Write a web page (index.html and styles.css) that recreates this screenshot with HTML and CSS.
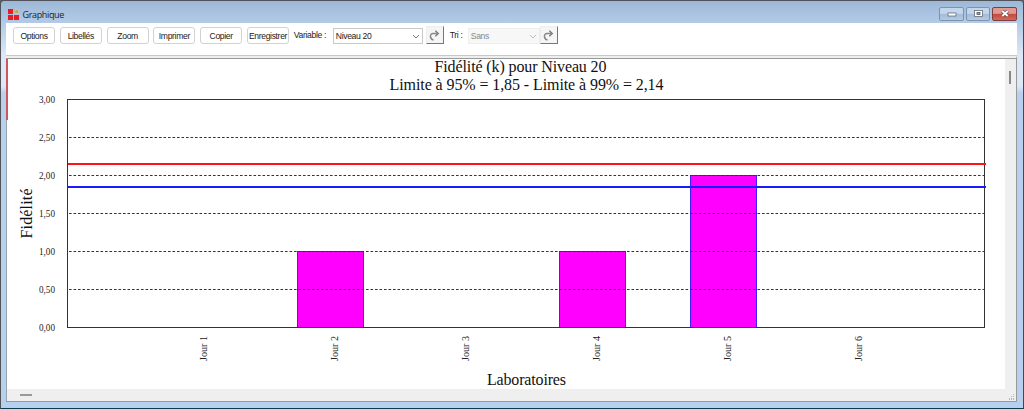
FILE: index.html
```html
<!DOCTYPE html>
<html lang="fr">
<head>
    <meta charset="UTF-8">
    <title>Graphique</title>
    <link rel="stylesheet" href="styles.css">
</head>
<body>
    <div class="window">
        <div class="titlebar">
            <svg class="logo" width="12" height="12" viewBox="0 0 12 12">
                <path d="M0 0h5v5H0zM0 6h5v5H0zM6 6h5v5H6z" fill="#e81c24"/>
                <path d="M6 0h5v5H6z" fill="#c9c4b4"/>
                <path d="M6 .5l2 3.5 1-3 1 3" fill="none" stroke="#b8964a" stroke-width=".8"/>
            </svg>
            <span class="title">Graphique</span>
            <div class="controls">
                <span class="control">
                    <svg width="24" height="13" viewBox="0 0 24 13"><rect x="8" y="6" width="8" height="3" fill="#fff" stroke="#666c78" stroke-width=".8"/></svg>
                </span>
                <span class="control">
                    <svg width="23" height="13" viewBox="0 0 23 13"><rect x="7.5" y="3.5" width="8" height="6" fill="#fff" stroke="#666c78" stroke-width=".8"/><rect x="10" y="5.5" width="3" height="2" fill="#7fa0c4" stroke="#555c68" stroke-width=".8"/></svg>
                </span>
                <span class="control close">
                    <svg width="24" height="13" viewBox="0 0 24 13"><path d="M9.3 4l5.4 5M14.7 4L9.3 9" stroke="#69393a" stroke-width="3.4"/><path d="M9.3 4l5.4 5M14.7 4L9.3 9" stroke="#fff" stroke-width="2"/></svg>
                </span>
            </div>
        </div>

        <div class="toolbar">
            <button>Options</button>
            <button>Libellés</button>
            <button>Zoom</button>
            <button>Imprimer</button>
            <button>Copier</button>
            <button>Enregistrer</button>
            <label class="label-variable">Variable :</label>
            <div class="combo">
                <span>Niveau 20</span>
                <svg width="8" height="5" viewBox="0 0 8 5"><path d="M1 1l3 3 3-3" fill="none" stroke="#777"/></svg>
            </div>
            <div class="refresh">
                <svg width="11" height="11" viewBox="0 0 11 11"><path d="M4.5 10C.5 9 .5 3.5 4 3.5H8" fill="none" stroke="#888" stroke-width="1.5"/><path d="M6.3.8L9.3 3.5 6.3 6.2" fill="none" stroke="#777" stroke-width="1.3"/></svg>
            </div>
            <label class="label-tri">Tri :</label>
            <div class="combo disabled">
                <span>Sans</span>
                <svg width="8" height="5" viewBox="0 0 8 5"><path d="M1 1l3 3 3-3" fill="none" stroke="#bbb"/></svg>
            </div>
            <div class="refresh refresh-tri">
                <svg width="11" height="11" viewBox="0 0 11 11"><path d="M4.5 10C.5 9 .5 3.5 4 3.5H8" fill="none" stroke="#888" stroke-width="1.5"/><path d="M6.3.8L9.3 3.5 6.3 6.2" fill="none" stroke="#777" stroke-width="1.3"/></svg>
            </div>
        </div>

        <div class="view">
            <svg class="chart" width="999" height="330" viewBox="6 59 999 330">
                <rect x="6" y="59" width="1" height="330" fill="#9aa3b0"/>
                <rect x="6" y="59" width="2" height="61" fill="#cf5460"/>

                <g class="heading">
                    <text x="434.5" y="72" textLength="172">Fidélité (k) pour Niveau 20</text>
                    <text x="389.5" y="89.5" textLength="274">Limite à 95% = 1,85 - Limite à 99% = 2,14</text>
                    <text x="487" y="385" textLength="79">Laboratoires</text>
                    <text transform="translate(32 238.5) rotate(-90)" textLength="50">Fidélité</text>
                </g>

                <!-- bars -->
                <g class="bars">
                    <rect x="297.5" y="251.5" width="66" height="76"/>
                    <rect x="559.5" y="251.5" width="66" height="76"/>
                    <rect x="690.5" y="175.5" width="66" height="152"/>
                </g>

                <!-- grid -->
                <path class="grid" d="M69 137.5H984M69 175.5H984M69 213.5H984M69 251.5H984M69 289.5H984"/>
                <rect class="frame" x="67.5" y="99.5" width="917" height="228"/>

                <!-- limits -->
                <rect x="68" y="163" width="918" height="2" fill="#ff1414"/>
                <rect x="68" y="186" width="918" height="2" fill="#1a1aff"/>

                <g class="ticks">
                    <text x="39" y="102.5" textLength="16" lengthAdjust="spacingAndGlyphs">3,00</text>
                    <text x="39" y="140.5" textLength="16" lengthAdjust="spacingAndGlyphs">2,50</text>
                    <text x="39" y="179" textLength="16" lengthAdjust="spacingAndGlyphs">2,00</text>
                    <text x="39" y="217" textLength="16" lengthAdjust="spacingAndGlyphs">1,50</text>
                    <text x="39" y="255" textLength="16" lengthAdjust="spacingAndGlyphs">1,00</text>
                    <text x="39" y="293" textLength="16" lengthAdjust="spacingAndGlyphs">0,50</text>
                    <text x="39" y="331" textLength="16" lengthAdjust="spacingAndGlyphs">0,00</text>
                    <text transform="translate(206.5 361) rotate(-90)" textLength="25" lengthAdjust="spacingAndGlyphs">Jour 1</text>
                    <text transform="translate(337.5 361) rotate(-90)" textLength="25" lengthAdjust="spacingAndGlyphs">Jour 2</text>
                    <text transform="translate(468.5 361) rotate(-90)" textLength="25" lengthAdjust="spacingAndGlyphs">Jour 3</text>
                    <text transform="translate(599.5 361) rotate(-90)" textLength="25" lengthAdjust="spacingAndGlyphs">Jour 4</text>
                    <text transform="translate(730.5 361) rotate(-90)" textLength="25" lengthAdjust="spacingAndGlyphs">Jour 5</text>
                    <text transform="translate(861.5 361) rotate(-90)" textLength="25" lengthAdjust="spacingAndGlyphs">Jour 6</text>
                </g>
            </svg>
            <div class="vscroll"><i></i></div>
            <div class="hscroll">
                <i></i>
                <svg width="7" height="7" viewBox="0 0 7 7"><path d="M5 0h1v1H5zM3 2h1v1H3zM5 2h1v1H5zM1 4h1v2H1zM3 4h1v2H3zM5 4h1v2H5z" fill="#b5b5b5"/></svg>
            </div>
        </div>
    </div>
</body>
</html>
```
FILE: styles.css
```css
* {
    box-sizing: border-box;
}
body {
    margin: 0;
    background-color: #5a6066;
    font-family: "Liberation Sans", Arial, sans-serif;
    font-size: 8.6px;
    letter-spacing: -0.35px;
    color: #222;
}
svg {
    display: block;
}
.window {
    height: 409px;
    padding: 0 6px 0 5px;
    border: 1px solid #505458;
    border-right-color: #06606e;
    border-bottom-color: #033f4d;
    border-radius: 4px 4px 0 0;
    background: linear-gradient(#9db8d7 0, #b3cbe7 22px, #dce8f7 55px, #dce8f7 85px, #b7d0ee 92px);
    overflow: hidden;
}
.titlebar {
    display: flex;
    height: 22px;
    padding-left: 2px;
}
.logo {
    margin-top: 8px;
}
.title {
    margin: 8px 0 0 2.5px;
    font-family: "Open Sans", sans-serif;
    font-size: 9px;
    line-height: 12px;
    letter-spacing: -0.35px;
}
.controls {
    display: flex;
    gap: 2px;
    margin: 6px 0 0 auto;
}
.control {
    height: 14px;
    border: 1px solid #7f93ae;
    border-radius: 2px;
    background: linear-gradient(#c4d6eb 45%, #a3bbd7 50%, #b5cbe4);
}
.control svg {
    margin: -1px -0.5px;
}
.close {
    border-color: #803e42;
    background: linear-gradient(#df9a91 45%, #c6473a 50%, #d16a58);
}
.toolbar {
    display: flex;
    height: 33px;
    padding: 4px 0 0 7px;
    background-color: #fff;
    border-bottom: 1px solid #c8c8c8;
}
button {
    width: 42px;
    height: 17px;
    margin: 0 4.8px 0 0;
    padding: 0;
    border: 1px solid #d2d2d2;
    border-radius: 3px;
    background-color: #fff;
    font: inherit;
    letter-spacing: inherit;
    color: inherit;
    white-space: nowrap;
}
.label-variable,
.label-tri {
    width: 39px;
    line-height: 17px;
    white-space: nowrap;
}
.label-tri {
    width: 18px;
    margin-left: 6px;
}
.combo {
    display: flex;
    align-items: center;
    justify-content: space-between;
    width: 90px;
    height: 16px;
    margin-top: 1px;
    padding: 0 2px;
    border: 1px solid #c8c8c8;
}
.disabled {
    width: 72px;
    border-color: #eee;
    background-color: #f7f7f7;
    color: #888;
}
.refresh {
    display: flex;
    align-items: center;
    justify-content: center;
    width: 18px;
    height: 18px;
    margin: -1px 0 0 3px;
    border: 1px solid #eee;
    border-right: 1px solid #777;
    border-bottom: 1px solid #777;
    background-color: #f5f5f5;
}
.refresh-tri {
    margin-left: 0;
}
.view {
    display: grid;
    grid-template-columns: 999px 1fr;
    grid-template-rows: 330px 12px;
    height: 346px;
    border-top: 2px solid #eee;
    border-right: 1px solid #999;
    border-bottom: 1px solid #999;
    box-shadow: inset 0 1px #999;
    padding-top: 1px;
    background-color: #efefef;
}
.chart {
    background-color: #fff;
    font-family: "Liberation Serif", "Times New Roman", serif;
    letter-spacing: 0;
}
.heading {
    font-size: 16px;
    fill: #111;
}
.ticks {
    font-size: 10.5px;
    fill: #222;
}
.bars {
    fill: #f0f;
    stroke: #3a20ff;
}
.grid {
    fill: none;
    stroke: #333;
    stroke-dasharray: 2.6 1.9;
}
.frame {
    fill: none;
    stroke: #333;
}
.vscroll {
    padding: 12px 0 0 4px;
}
.vscroll i {
    display: block;
    width: 2px;
    height: 13px;
    background-color: #888;
}
.hscroll {
    grid-column: 1 / 3;
    display: flex;
    justify-content: space-between;
    padding: 5px 1px 0 13px;
    border-left: 1px solid #9aa3b0;
}
.hscroll i {
    width: 12px;
    height: 2px;
    background-color: #999;
}
```
